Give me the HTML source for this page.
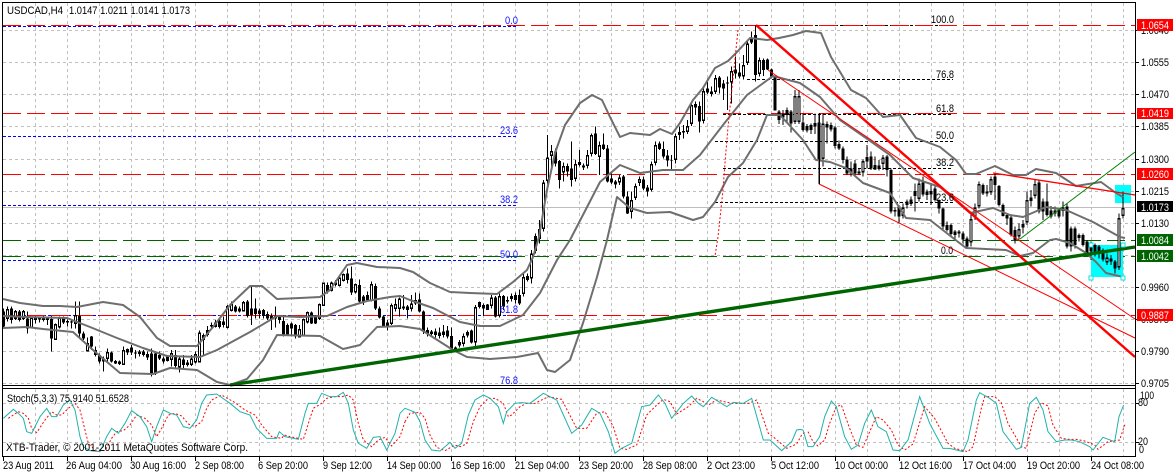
<!DOCTYPE html>
<html><head><meta charset="utf-8"><style>
html,body{margin:0;padding:0;background:#fff;width:1173px;height:473px;overflow:hidden}
svg{display:block}
text{font-family:"Liberation Sans",sans-serif;font-size:11px;fill:#000}
.b text,text.b{fill:#1414ff}
.w{fill:#fff;font-weight:normal}
</style></head><body>
<svg width="1173" height="473" viewBox="0 0 1173 473" xmlns="http://www.w3.org/2000/svg">
<rect width="1173" height="473" fill="#fff"/>
<!-- grid -->
<path shape-rendering="crispEdges" stroke="#c0c0c0" stroke-width="1" stroke-dasharray="3 3" fill="none" d="M3 30.5H1135M3 62.5H1135M3 94.5H1135M3 126.5H1135M3 159.5H1135M3 191.5H1135M3 223.5H1135M3 255.5H1135M3 287.5H1135M3 319.5H1135M3 351.5H1135M3 383.5H1135M3 403.5H1135M3 442.5H1135
M35.5 3V385M67.5 3V385M99.5 3V385M131.5 3V385M163.5 3V385M195.5 3V385M227.5 3V385M259.5 3V385M291.5 3V385M323.5 3V385M355.5 3V385M387.5 3V385M419.5 3V385M451.5 3V385M483.5 3V385M515.5 3V385M547.5 3V385M579.5 3V385M611.5 3V385M643.5 3V385M675.5 3V385M707.5 3V385M739.5 3V385M771.5 3V385M803.5 3V385M835.5 3V385M867.5 3V385M899.5 3V385M931.5 3V385M963.5 3V385M995.5 3V385M1027.5 3V385M1059.5 3V385M1091.5 3V385M1123.5 3V385
M35.5 389V456M67.5 389V456M99.5 389V456M131.5 389V456M163.5 389V456M195.5 389V456M227.5 389V456M259.5 389V456M291.5 389V456M323.5 389V456M355.5 389V456M387.5 389V456M419.5 389V456M451.5 389V456M483.5 389V456M515.5 389V456M547.5 389V456M579.5 389V456M611.5 389V456M643.5 389V456M675.5 389V456M707.5 389V456M739.5 389V456M771.5 389V456M803.5 389V456M835.5 389V456M867.5 389V456M899.5 389V456M931.5 389V456M963.5 389V456M995.5 389V456M1027.5 389V456M1059.5 389V456M1091.5 389V456M1123.5 389V456"/>
<!-- current price line -->
<path shape-rendering="crispEdges" stroke="#bdbdbd" d="M3 207.5H1135"/>
<!-- blue fib lines -->
<path shape-rendering="crispEdges" stroke="#0000ff" stroke-dasharray="3 2" fill="none" d="M3 26.5H516M3 136.5H516M3 205.5H516M3 260.5H516M3 315.5H516"/>
<!-- black fib lines -->
<path shape-rendering="crispEdges" stroke="#000" stroke-dasharray="3 2" fill="none" d="M715 25.5H955M747 79.5H953M723 114.5H953M715 141.5H953M723 168.5H953M715 202.5H953M800 256.5H953"/>
<!-- dashed levels -->
<path shape-rendering="crispEdges" stroke="#f00" stroke-dasharray="18 6" fill="none" d="M3 25.5H1135M3 113.5H1135M3 174.5H1135M3 315.5H1135"/>
<path shape-rendering="crispEdges" stroke="#006400" stroke-dasharray="18 6" fill="none" d="M3 240.5H1135M3 256.5H1135"/>
<!-- cyan rectangles -->
<rect x="1115" y="185" width="16" height="18" fill="#00ffff"/>
<rect x="1091" y="245" width="32" height="32" fill="#00ffff"/>
<!-- candles -->
<g transform="translate(0,240) scale(.33333)" shape-rendering="crispEdges" fill="none">
<path stroke="#000" stroke-width="3" d="M10 205V265M22 200V245M34 200V250M46 210V240M58 210V245M70 210V240M82 215V280M94 230V265M106 228V250M118 230V248M130 228V245M142 230V255M154 228V335M166 250V300M178 230V265M190 230V252M202 238V260M214 238V265M226 185V265M238 185V295M250 275V300M262 292V335M274 288V330M286 320V350M298 340V370M310 350V395M322 325V368M334 335V368M346 360V372M358 362V375M370 320V375M382 325V345M394 315V345M406 330V355M418 330V350M430 330V350M442 335V360M454 325V410M466 335V405M478 335V360M490 350V370M502 345V365M514 330V380M526 330V385M538 350V398M550 345V385M562 360V380M574 345V378M586 335V370M598 272V368M610 280V345M622 258V290M634 248V265M646 240V262M658 235V265M670 230V262M682 195V265M694 185V215M706 195V218M718 200V218M730 183V215M742 180V232M754 135V255M766 175V235M778 205V235M790 207V235M802 215V240M814 220V270M826 200V262M838 225V250M850 225V290M862 250V288M874 248V290M886 252V295M898 255V292M910 235V290M922 215V250M934 215V252M946 225V252M958 190V240M970 128V198M982 128V160M994 125V155M1006 120V140M1018 105V140M1030 100V125M1042 85V130M1054 80V165M1066 130V160M1078 118V190M1090 165V195M1102 155V185M1114 125V185M1126 130V210M1138 200V235M1150 228V262M1162 240V272M1174 190V255M1186 175V215M1198 172V230"/>
<path stroke="#000" stroke-width="9" d="M10 215V260M34 205V240M58 215V240M82 235V265M106 232V240M118 232V238M142 232V240M154 237V295M190 235V248M202 243V248M214 245V248M238 228V280M250 280V295M274 290V320M286 330V345M298 345V365M310 355V365M334 338V365M346 363V370M358 365V372M394 322V337M406 337V340M418 335V342M430 335V345M442 342V352M454 340V400M466 340V400M478 345V355M490 355V365M526 345V378M550 358V375M562 368V375M610 285V300M622 270V285M634 255V260M670 245V255M706 200V215M718 205V215M742 185V228M754 205V225M766 205V222M778 212V222M790 210V228M802 222V235M814 228V238M826 228V235M838 228V240M850 243V285M862 255V285M874 250V265M886 255V290M934 218V250M946 228V250M982 135V155M1006 128V135M1042 100V120M1054 115V158M1078 135V185M1090 170V185M1102 165V180M1126 138V205M1138 205V232M1150 230V258M1162 248V258"/>
<path stroke="#000" stroke-width="9" stroke-linecap="square" d="M22 212V233M46 217V233M70 217V233M94 237V260M130 234V235M166 257V295M178 237V258M226 230V248M262 314V330M322 340V353M370 334V370M382 332V333M502 352V358M514 344V356M538 360V378M574 360V370M586 347V363M598 282V363M646 252V256M658 247V256M682 202V260M694 197V208M730 190V210M898 272V288M910 242V283M922 220V243M958 197V233M970 132V193M994 132V148M1018 117V133M1030 107V118M1066 137V153M1114 137V178M1174 200V248M1186 197V203M1198 180V203"/>
<path stroke="#fff" stroke-width="3" d="M22 212V233M46 217V233M70 217V233M94 237V260M166 257V295M178 237V258M226 230V248M262 314V330M322 340V353M370 334V370M514 344V356M538 360V378M574 360V370M586 347V363M598 282V363M682 202V260M694 197V208M730 190V210M898 272V288M910 242V283M922 220V243M958 197V233M970 132V193M994 132V148M1018 117V133M1030 107V118M1066 137V153M1114 137V178M1174 200V248M1186 197V203M1198 180V203"/>
</g>
<g transform="translate(400,240) scale(.33333)" shape-rendering="crispEdges" fill="none">
<path stroke="#000" stroke-width="3" d="M10 165V210M22 195V235M34 165V215M46 158V195M58 160V218M70 212V282M82 262V290M94 270V288M106 265V292M118 262V295M130 255V292M142 258V295M154 262V330M166 320V335M178 300V322M190 280V320M202 272V292M214 268V310M226 195V322M238 185V205M250 190V228M262 192V210M274 165V205M286 168V232M298 160V232M310 165V210M322 170V190M334 160V185M346 158V190M358 148V195M370 100V170M382 100V125M394 30V130M406 -20V40"/>
<path stroke="#000" stroke-width="9" d="M10 200V205M22 200V210M46 180V190M58 178V215M70 215V275M82 270V282M94 275V282M106 275V285M142 272V290M154 288V325M166 322V330M214 272V308M250 195V205M286 172V230M310 168V200M322 180V185M346 165V180M358 165V190M382 108V120"/>
<path stroke="#000" stroke-width="9" stroke-linecap="square" d="M34 195V203M118 282V283M130 279V281M178 312V311M190 292V308M202 282V281M226 205V303M238 197V191M262 205V198M274 177V193M298 172V223M334 172V173M370 115V158M394 45V111M406 -8V29"/>
<path stroke="#fff" stroke-width="3" d="M34 195V203M190 292V308M226 205V303M274 177V193M298 172V223M370 115V158M394 45V111"/>
</g>
<g transform="translate(400,0) scale(.33333)" shape-rendering="crispEdges" fill="none">
<path stroke="#000" stroke-width="3" d="M418 660V730M430 540V695M442 405V550M454 435V500M466 445V500M478 480V565M490 488V545M502 490V530M514 425V560M526 480V545M538 450V500M550 490V510M562 450V505M574 400V470M586 380V465M598 425V525M610 400V450M622 435V548M634 520V552M646 540V565M658 525V555M670 525V595M682 575V642M694 575V655M706 550V600M718 530V558M730 530V570M742 555V590M754 485V575M766 425V497M778 425V450M790 425V475M802 450V500M814 465V510M826 400V490M838 380V420M850 375V415M862 360V402M874 310V378M886 305V345M898 305V398M910 265V370M922 235V282M934 260V290M946 225V282M958 228V280M970 240V300M982 230V330M994 200V310M1006 170V235M1018 190V235M1030 165V238M1042 120V195M1054 95V132M1066 75V245M1078 172V230M1090 175V228M1102 175V210M1114 205V235"/>
<path stroke="#000" stroke-width="9" d="M466 455V490M478 483V540M502 498V515M514 505V540M550 497V502M586 400V462M610 433V447M622 445V545M634 535V548M646 545V553M670 530V590M682 590V640M730 538V565M742 562V575M778 430V447M790 447V470M802 467V482M814 480V482M850 393V397M886 312V322M898 318V365M922 265V278M934 275V282M958 233V263M970 250V265M982 247V250M1006 208V220M1018 218V230M1066 105V225M1090 180V210M1102 178V208M1114 208V230"/>
<path stroke="#000" stroke-width="9" stroke-linecap="square" d="M418 692V713M430 552V683M442 477V538M454 457V463M490 502V513M526 497V533M538 490V490M562 470V493M574 410V458M598 440V466M658 537V543M694 605V631M706 562V590M718 542V545M754 497V565M766 439V485M826 412V475M838 400V400M862 382V391M874 319V368M910 277V358M946 239V271M994 217V243M1030 199V225M1042 135V185M1054 120V123M1078 185V218"/>
<path stroke="#fff" stroke-width="3" d="M418 692V713M430 552V683M442 477V538M454 457V463M490 502V513M526 497V533M562 470V493M574 410V458M598 440V466M658 537V543M694 605V631M706 562V590M718 542V545M754 497V565M766 439V485M826 412V475M862 382V391M874 319V368M910 277V358M946 239V271M994 217V243M1030 199V225M1042 135V185M1078 185V218"/>
</g>
<g transform="translate(773,0) scale(.33333)" shape-rendering="crispEdges" fill="none">
<path stroke="#000" stroke-width="3" d="M18 330V372M30 330V375M42 322V370M54 330V398M66 270V372M78 270V372M90 340V395M102 372V398M114 370V402M126 340V402M138 340V552M150 340V500M162 365V430M174 368V395M186 378V445M198 422V450M210 440V490M222 470V525M234 485V530M246 480V525M258 505V525M270 478V530M282 435V505M294 455V510M306 470V510M318 480V512M330 465V510M342 465V530M354 505V640M366 622V650M378 615V670M390 610V655M402 598V625M414 590V618M426 550V635M438 535V605M450 530V590M462 568V600M474 555V615M486 560V605M498 598V640M510 622V690M522 665V695M534 670V708M546 690V715M558 690V712M570 695V730M582 710V745M594 640V740M606 610V660M618 545V625M630 550V585M642 555V590M654 530V585M666 520V600M678 555V620M690 610V650M702 640V675M714 648V710M726 680V730M738 670V718M750 660V700M762 575V675M774 570V620M786 540V595M798 540V640M810 595V660M822 550V650M834 618V655M846 620V650M858 625V655M870 605V650M882 610V745M894 680V755M906 680V745M918 700V725M930 700V740M942 720V765M954 725V780M966 730V770M978 735V775M990 745V785M1002 760V795M1014 765V795M1026 780V820M1038 640V810M1050 575V655"/>
<path stroke="#000" stroke-width="9" d="M6 230V332M18 335V360M42 330V345M54 335V370M90 368V390M102 378V392M138 368V480M174 375V388M186 382V438M198 432V445M210 445V480M222 478V520M234 505V520M246 490V520M258 515V520M294 470V505M306 495V508M342 470V510M354 510V635M366 630V635M378 620V650M402 605V615M450 548V583M462 575V585M486 565V600M498 600V625M510 625V680M522 675V690M534 675V702M546 695V705M558 695V700M570 700V718M582 715V740M630 555V580M642 575V580M666 530V555M678 558V615M690 615V648M702 645V655M714 652V705M726 690V720M798 548V635M810 605V635M822 605V645M834 632V650M858 630V650M882 620V740M894 685V740M906 685V735M930 705V735M942 725V760M954 730V755M966 735V755M978 740V758M990 750V778M1014 775V785M1026 785V805"/>
<path stroke="#000" stroke-width="9" stroke-linecap="square" d="M30 347V348M66 292V361M78 292V361M114 380V385M126 375V373M150 375V473M162 377V378M270 487V513M282 475V480M318 502V501M330 477V488M390 627V643M414 607V603M426 577V583M438 555V593M474 579V578M594 662V723M606 627V648M618 557V615M654 542V573M738 692V705M750 677V678M762 605V663M774 597V598M786 557V583M846 636V636M870 627V628M918 710V710M1002 777V783M1038 659V798M1050 629V643"/>
<path stroke="#fff" stroke-width="3" d="M66 292V361M78 292V361M150 375V473M270 487V513M330 477V488M390 627V643M438 555V593M594 662V723M606 627V648M618 557V615M654 542V573M738 692V705M762 605V663M786 557V583M1002 777V783M1038 659V798M1050 629V643"/>
</g>
<!-- bollinger -->
<g fill="none" stroke="#6e6e6e" stroke-width="2" stroke-linejoin="round">
<polyline points="3,299 20,303 43,306 60,306 77,307 103,302 123,305 140,317 157,338 170,346 197,346 213,327 230,305 250,286 262,286 277,299 300,298 320,297 330,290 347,265 357,263 377,267 400,268 413,272 430,283 450,292 470,293 497,294 513,282 527,270 533,257 539,237 547,190 555,153 565,125 580,103 592,95 602,100 610,117 620,137 630,133 650,135 660,129 672,134 680,123 693,100 703,88 715,68 728,61 737,52 750,38 767,40 779,38 793,35 806,31 821,33 831,57 851,90 866,98 883,117 900,115 916,138 940,147 956,160 966,174 976,174 995,166 1013,175 1026,175 1036,169 1056,173 1076,186 1101,182 1116,193 1123,197"/>
<polyline points="3,316 27,317 67,318 90,327 117,338 143,348 167,356 200,357 217,350 250,332 277,316 300,317 327,316 347,307 367,301 390,297 400,296 410,300 433,308 460,322 480,326 500,326 523,315 540,293 557,260 570,240 600,182 620,165 640,173 663,170 683,170 700,155 723,125 747,95 773,76 800,83 820,97 840,120 866,138 890,155 913,178 940,187 970,213 993,208 1010,215 1023,217 1046,207 1066,210 1093,222 1120,237 1125,238"/>
<polyline points="3,328 27,327 43,329 73,332 93,350 120,373 153,374 170,368 197,370 217,382 230,385 247,379 263,360 277,335 320,336 343,349 360,345 377,327 400,326 420,329 453,350 467,357 490,359 517,357 538,353 547,370 555,372 570,360 583,323 597,277 607,240 617,197 630,208 647,213 670,212 693,220 703,217 715,202 728,177 743,163 757,140 767,115 780,115 803,140 816,160 830,162 846,168 863,183 890,193 906,218 930,220 953,238 966,248 1006,250 1020,256 1033,253 1050,240 1056,239 1070,243 1086,253 1096,262 1106,273 1123,277"/>
</g>
<!-- trendlines -->
<polyline fill="none" stroke="#f00" stroke-width="1" stroke-dasharray="2 2" points="738,30 728,127 725,163 723,190 718,237 715,256"/>
<path fill="none" stroke="#000" d="M819.5 113V184"/>
<path fill="none" stroke="#f00" stroke-width="1" d="M768 70L1135 319M819 184L1135 338"/>
<path fill="none" stroke="#f00" stroke-width="1.3" d="M993 173L1135 195"/>
<path fill="none" stroke="#008000" stroke-width="1" d="M1020 239L1135 152"/>
<path fill="none" stroke="#f00" stroke-width="2.4" d="M756 25L1135 357"/>
<path fill="none" stroke="#006400" stroke-width="3.4" d="M230 385L1135 247"/>
<!-- handles -->
<g fill="#fff" stroke="#00e5e5" stroke-width="1" shape-rendering="crispEdges">
<rect x="1089" y="243" width="4" height="4"/><rect x="1121" y="243" width="4" height="4"/><rect x="1089" y="276" width="4" height="4"/><rect x="1121" y="276" width="4" height="4"/>
</g>
<!-- stochastic -->
<g fill="none" stroke-width="1">
<g stroke="#f00" stroke-dasharray="2 2">
<polyline transform="translate(5,240) scale(.33333)" stroke-width="3" stroke-dasharray="6 6" points="10,535 40,515 55,520 70,535 80,565 95,578 120,540 140,515 155,525 170,525 190,505 210,490 225,510 240,570 250,610 270,630 300,632 320,595 335,575 355,572 375,555 395,525 420,535 440,555 455,590 470,565 490,525 510,520 530,528 550,552 570,560 590,545 605,505 620,480 650,465 690,488 720,510 750,525 770,555 800,590 830,595 838,585 855,590 895,598 915,535 925,505 950,490 965,475 990,470 1010,470 1030,465 1045,480 1060,550 1075,600 1100,620 1120,600 1140,592 1160,618 1185,590 1200,545"/>
<polyline transform="translate(405,240) scale(.33333)" stroke-width="3" stroke-dasharray="6 6" points="0,545 15,520 45,517 60,535 75,585 95,622 120,632 150,615 165,620 185,612 205,545 225,500 250,475 270,475 295,490 310,530 320,525 345,500 365,490 390,490 430,470 470,478 515,565 545,565 575,520 600,515 625,560 645,625 665,628 695,615 725,525 750,500 775,478 795,485 815,522 850,500 875,475 895,485 910,495 935,480 980,490 1000,490 1030,490 1055,480 1090,580 1110,595 1145,625 1175,612 1190,585 1200,575"/>
<polyline transform="translate(778,240) scale(.33333)" stroke-width="3" stroke-dasharray="6 6" points="90,575 105,605 120,618 140,600 155,550 175,500 190,495 215,565 235,615 255,622 275,575 295,530 315,540 340,570 360,615 380,630 405,612 440,500 470,535 510,610 530,625 570,635 585,620 610,505 620,470 650,470 670,488 690,550 730,620 745,625 770,520 790,488 810,498 825,555 850,595 875,598 895,598 920,603 950,615 960,628 990,605 1025,600 1035,570 1042,550"/>
</g>
<g stroke="#20b2aa">
<polyline transform="translate(0,240) scale(.33333)" stroke-width="3" points="10,535 40,508 55,520 70,535 80,575 95,580 120,530 140,505 155,530 170,530 190,495 210,480 225,510 240,590 250,620 270,632 300,635 320,590 335,565 355,580 375,550 395,512 420,530 440,560 455,605 470,560 490,510 510,520 530,525 550,560 570,565 590,540 605,490 620,465 650,462 690,490 720,515 750,525 770,565 800,595 830,595 838,575 855,590 895,598 915,520 925,490 950,490 965,460 990,470 1010,470 1030,457 1045,490 1060,570 1075,610 1100,625 1120,592 1140,590 1160,630 1185,580 1200,520"/>
<polyline transform="translate(400,240) scale(.33333)" stroke-width="3" points="0,520 15,505 45,517 60,545 75,600 95,630 120,633 150,607 165,625 185,610 205,525 225,480 250,465 270,475 295,500 310,550 320,515 345,490 365,488 390,490 430,460 470,480 515,580 545,555 575,505 600,520 625,575 645,640 665,625 695,610 725,500 750,495 775,465 795,490 815,535 850,490 875,468 895,490 910,500 935,472 980,500 1000,487 1030,490 1055,475 1090,600 1110,600 1145,632 1175,605 1190,570 1200,568"/>
<polyline transform="translate(773,240) scale(.33333)" stroke-width="3" points="81,568 90,570 105,620 120,620 140,590 155,530 175,483 190,500 215,590 235,628 255,615 275,550 295,510 315,560 340,575 360,630 380,632 405,600 440,470 470,550 510,625 530,625 570,635 585,600 610,480 620,458 650,475 670,490 690,575 730,628 745,622 770,490 790,472 810,510 825,575 850,605 875,600 895,600 920,605 950,620 960,630 990,592 1025,605 1038,530 1052,495"/>
</g>
</g>
<!-- frame -->
<path shape-rendering="crispEdges" fill="none" stroke="#000" stroke-width="1" d="M2.5 2V457M2 2.5H1136M1135.5 2V457M2 385.5H1136M2 388.5H1136M2 456.5H1136"/>
<path shape-rendering="crispEdges" fill="none" stroke="#000" d="M1136 30.5h3M1136 62.5h3M1136 94.5h3M1136 126.5h3M1136 159.5h3M1136 191.5h3M1136 223.5h3M1136 287.5h3M1136 319.5h3M1136 351.5h3M1136 383.5h3M1136 403.5h3M1136 442.5h3M3.5 457v4M67.5 457v4M131.5 457v4M195.5 457v4M259.5 457v4M323.5 457v4M387.5 457v4M451.5 457v4M515.5 457v4M579.5 457v4M643.5 457v4M707.5 457v4M771.5 457v4M835.5 457v4M899.5 457v4M963.5 457v4M1027.5 457v4M1091.5 457v4"/>
<!-- chart text -->
<text x="7" y="14" textLength="56" lengthAdjust="spacingAndGlyphs">USDCAD,H4</text>
<text x="69" y="14" textLength="121" lengthAdjust="spacingAndGlyphs">1.0147 1.0211 1.0141 1.0173</text>
<text x="7" y="402" textLength="122" lengthAdjust="spacingAndGlyphs">Stoch(5,3,3) 75.9140 51.6528</text>
<text x="6" y="451" textLength="242" lengthAdjust="spacingAndGlyphs">XTB-Trader, © 2001-2011 MetaQuotes Software Corp.</text>
<g class="b">
<text x="505" y="24" textLength="13" lengthAdjust="spacingAndGlyphs">0.0</text>
<text x="500" y="134" textLength="18" lengthAdjust="spacingAndGlyphs">23.6</text>
<text x="500" y="203" textLength="18" lengthAdjust="spacingAndGlyphs">38.2</text>
<text x="500" y="258" textLength="18" lengthAdjust="spacingAndGlyphs">50.0</text>
<text x="500" y="313" textLength="18" lengthAdjust="spacingAndGlyphs">61.8</text>
<text x="500" y="384" textLength="18" lengthAdjust="spacingAndGlyphs">76.8</text>
</g>
<text x="931" y="23" textLength="23" lengthAdjust="spacingAndGlyphs">100.0</text>
<text x="936" y="78" textLength="18" lengthAdjust="spacingAndGlyphs">76.8</text>
<text x="936" y="112" textLength="18" lengthAdjust="spacingAndGlyphs">61.8</text>
<text x="936" y="139" textLength="18" lengthAdjust="spacingAndGlyphs">50.0</text>
<text x="936" y="166" textLength="18" lengthAdjust="spacingAndGlyphs">38.2</text>
<text x="936" y="201" textLength="18" lengthAdjust="spacingAndGlyphs">23.6</text>
<text x="941" y="254" textLength="12" lengthAdjust="spacingAndGlyphs">0.0</text>
<!-- scale -->
<g>
<text x="1141" y="34" textLength="28" lengthAdjust="spacingAndGlyphs">1.0640</text>
<text x="1141" y="66" textLength="28" lengthAdjust="spacingAndGlyphs">1.0555</text>
<text x="1141" y="98" textLength="28" lengthAdjust="spacingAndGlyphs">1.0470</text>
<text x="1141" y="130" textLength="28" lengthAdjust="spacingAndGlyphs">1.0385</text>
<text x="1141" y="163" textLength="28" lengthAdjust="spacingAndGlyphs">1.0300</text>
<text x="1141" y="195" textLength="28" lengthAdjust="spacingAndGlyphs">1.0215</text>
<text x="1141" y="227" textLength="28" lengthAdjust="spacingAndGlyphs">1.0130</text>
<text x="1141" y="291" textLength="28" lengthAdjust="spacingAndGlyphs">0.9960</text>
<text x="1141" y="323" textLength="28" lengthAdjust="spacingAndGlyphs">0.9875</text>
<text x="1141" y="355" textLength="28" lengthAdjust="spacingAndGlyphs">0.9790</text>
<text x="1141" y="387" textLength="28" lengthAdjust="spacingAndGlyphs">0.9705</text>
</g>
<rect x="1137" y="19" width="36" height="12" fill="#f00"/>
<rect x="1137" y="108" width="36" height="11" fill="#f00"/>
<rect x="1137" y="168" width="36" height="12" fill="#f00"/>
<rect x="1137" y="201" width="36" height="11" fill="#000"/>
<rect x="1137" y="234" width="36" height="12" fill="#006400"/>
<rect x="1137" y="250" width="36" height="12" fill="#006400"/>
<rect x="1137" y="309" width="36" height="12" fill="#f00"/>
<text class="w" x="1141" y="29" textLength="28" lengthAdjust="spacingAndGlyphs">1.0654</text>
<text class="w" x="1141" y="117" textLength="28" lengthAdjust="spacingAndGlyphs">1.0419</text>
<text class="w" x="1141" y="178" textLength="28" lengthAdjust="spacingAndGlyphs">1.0260</text>
<text class="w" x="1141" y="211" textLength="28" lengthAdjust="spacingAndGlyphs">1.0173</text>
<text class="w" x="1141" y="244" textLength="28" lengthAdjust="spacingAndGlyphs">1.0084</text>
<text class="w" x="1141" y="260" textLength="28" lengthAdjust="spacingAndGlyphs">1.0042</text>
<text class="w" x="1141" y="319" textLength="28" lengthAdjust="spacingAndGlyphs">0.9887</text>
<text x="1140" y="399" textLength="14" lengthAdjust="spacingAndGlyphs">100</text>
<text x="1138" y="406" textLength="10" lengthAdjust="spacingAndGlyphs">80</text>
<text x="1138" y="445" textLength="10" lengthAdjust="spacingAndGlyphs">20</text>
<text x="1139" y="453" textLength="5" lengthAdjust="spacingAndGlyphs">0</text>
<!-- time axis -->
<g>
<text x="3" y="469" textLength="51" lengthAdjust="spacingAndGlyphs">23 Aug 2011</text>
<text x="66" y="469" textLength="56" lengthAdjust="spacingAndGlyphs">26 Aug 04:00</text>
<text x="130" y="469" textLength="56" lengthAdjust="spacingAndGlyphs">30 Aug 16:00</text>
<text x="195" y="469" textLength="49" lengthAdjust="spacingAndGlyphs">2 Sep 08:00</text>
<text x="258" y="469" textLength="50" lengthAdjust="spacingAndGlyphs">6 Sep 20:00</text>
<text x="323" y="469" textLength="49" lengthAdjust="spacingAndGlyphs">9 Sep 12:00</text>
<text x="387" y="469" textLength="54" lengthAdjust="spacingAndGlyphs">14 Sep 00:00</text>
<text x="451" y="469" textLength="54" lengthAdjust="spacingAndGlyphs">16 Sep 16:00</text>
<text x="515" y="469" textLength="54" lengthAdjust="spacingAndGlyphs">21 Sep 04:00</text>
<text x="579" y="469" textLength="54" lengthAdjust="spacingAndGlyphs">23 Sep 20:00</text>
<text x="643" y="469" textLength="54" lengthAdjust="spacingAndGlyphs">28 Sep 08:00</text>
<text x="707" y="469" textLength="48" lengthAdjust="spacingAndGlyphs">2 Oct 23:00</text>
<text x="771" y="469" textLength="48" lengthAdjust="spacingAndGlyphs">5 Oct 12:00</text>
<text x="835" y="469" textLength="53" lengthAdjust="spacingAndGlyphs">10 Oct 00:00</text>
<text x="899" y="469" textLength="53" lengthAdjust="spacingAndGlyphs">12 Oct 16:00</text>
<text x="963" y="469" textLength="53" lengthAdjust="spacingAndGlyphs">17 Oct 04:00</text>
<text x="1027" y="469" textLength="53" lengthAdjust="spacingAndGlyphs">19 Oct 20:00</text>
<text x="1091" y="469" textLength="53" lengthAdjust="spacingAndGlyphs">24 Oct 08:00</text>
</g>
</svg>
</body></html>
